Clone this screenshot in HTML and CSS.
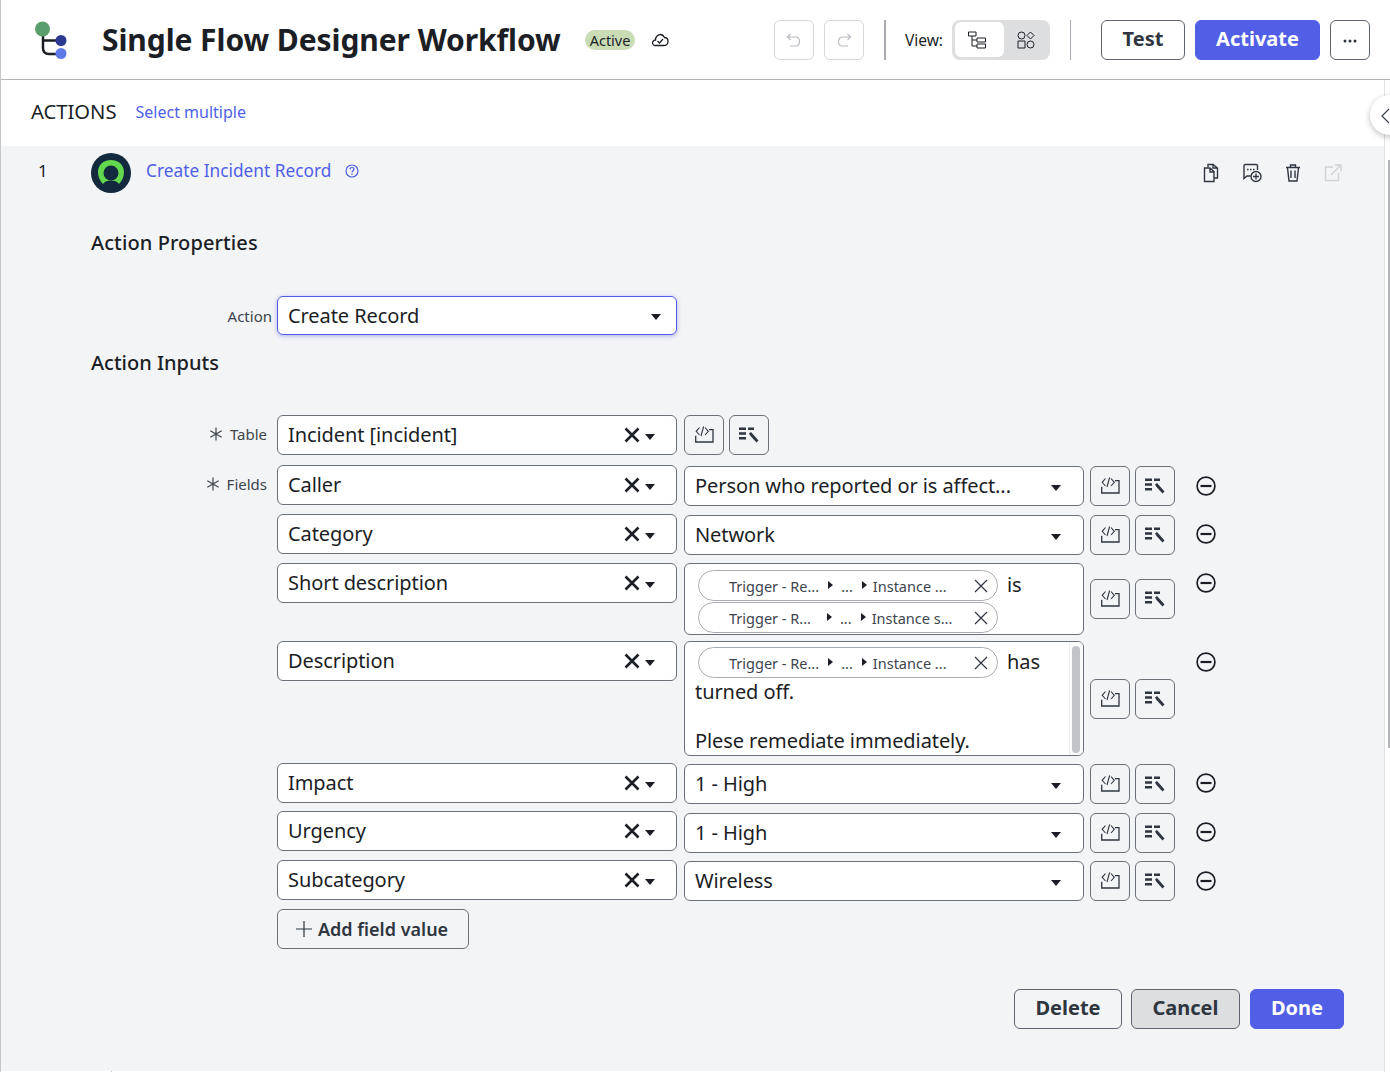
FILE: index.html
```html
<!DOCTYPE html>
<html>
<head>
  <meta charset="utf-8">
  <title>Single Flow Designer Workflow</title>
  <link rel="stylesheet" href="styles.css">
</head>
<body>
  <svg class="defs" width="0" height="0">
    <symbol id="i-code" viewBox="0 0 20 20">
      <path d="M5.500 2.500 2.200 6.300 5.500 10M11 2.500 14.300 6.300 11 10M9.600 1.500 7 11" fill="none" stroke="currentColor" stroke-width="1.100"/>
      <path d="M1.700 10.700V17H19V4.700H15" fill="none" stroke="currentColor" stroke-width="1.300"/>
    </symbol>
    <symbol id="i-wand" viewBox="0 0 20 20">
      <path d="M0 2.500H7V5H0ZM9 2.500H15V5H9ZM0 7.200H7V9.800H0ZM0 12H7V14.600H0Z" fill="currentColor"/>
      <path d="M10 8.500 12 7 14 9.200 19.500 15.500 17.500 17.500 11.500 11Z" fill="currentColor"/>
    </symbol>
    <symbol id="i-minus" viewBox="0 0 20 20">
      <circle cx="10" cy="10" r="8.900" fill="none" stroke="currentColor" stroke-width="1.700"/>
      <path d="M4.500 10H15.500" stroke="currentColor" stroke-width="2.200"/>
    </symbol>
    <symbol id="i-clear" viewBox="0 0 16 16">
      <path d="M1.500 1.500 14.500 14.500M14.500 1.500 1.500 14.500" stroke="currentColor" stroke-width="2.600"/>
    </symbol>
    <symbol id="i-chip-x" viewBox="0 0 16 16">
      <path d="M2 2 14 14M14 2 2 14" stroke="currentColor" stroke-width="1.200"/>
    </symbol>
    <symbol id="i-star" viewBox="0 0 14 14">
      <path d="M7 .5V13.500M1.300 3.800 12.700 10.200M12.700 3.800 1.300 10.200" stroke="currentColor" stroke-width="1.200"/>
    </symbol>
  </svg>

  <div class="app">
    <header class="topbar">
      <svg class="logo" width="34" height="40" viewBox="0 0 34 40">
        <path d="M8 10V28Q8 34 14 34H24M8 20.500H24" fill="none" stroke="#1b1e25" stroke-width="2.500"/>
        <circle cx="7.500" cy="9" r="7.500" fill="#5a9e6b"/>
        <circle cx="26" cy="20.500" r="5.500" fill="#2b3990"/>
        <circle cx="26" cy="33.500" r="5.500" fill="#6079e8"/>
      </svg>
      <h1 class="title">Single Flow Designer Workflow</h1>
      <span class="badge">Active</span>
      <svg class="cloud" width="18" height="14" viewBox="0 0 18 14">
        <path d="M4 12.500C1.500 12.500 1 9.500 2 8.500 2.500 7.500 3.500 7 4.500 7 4.500 3.500 7 1.500 9.500 1.500 12 1.500 13 3.500 13.500 4.500 16 4.500 17 6.500 17 8.500 17 11 15 12.500 13 12.500Z" fill="none" stroke="#1b1e25" stroke-width="1.300"/>
        <path d="M6.500 8 8.500 10 12 6" fill="none" stroke="#1b1e25" stroke-width="1.200"/>
      </svg>

      <div class="topbar-tools">
        <button class="square-btn is-disabled">
          <svg width="16" height="16" viewBox="0 0 16 16"><path d="M4.500 2 1.500 5 4.500 8M2 5H9.500C12 5 13.500 7 13.500 9.500 13.500 12 12 14 9.500 14H4" fill="none" stroke="currentColor" stroke-width="1.200"/></svg>
        </button>
        <button class="square-btn is-disabled">
          <svg width="16" height="16" viewBox="0 0 16 16"><path d="M11.500 2 14.500 5 11.500 8M14 5H6.500C4 5 2.500 7 2.500 9.500 2.500 12 4 14 6.500 14H12" fill="none" stroke="currentColor" stroke-width="1.200"/></svg>
        </button>
        <span class="divider divider-thick"></span>
        <span class="view-label">View:</span>
        <div class="view-switch">
          <span class="view-opt is-on">
            <svg width="18" height="18" viewBox="0 0 18 18"><path d="M.5 1H8V5H.5ZM9 7H17.500V11H9ZM9 13H17.500V17H9ZM4 5V15H9M4 9H9" fill="none" stroke="#1b1e25" stroke-width="1"/></svg>
          </span>
          <span class="view-opt view-opt-off">
            <svg width="18" height="18" viewBox="0 0 18 18"><circle cx="4.500" cy="4.500" r="3.500" fill="none" stroke="#1b1e25"/><path d="M13.500 1 17 4.500 13.500 8 10 4.500ZM1 10H8V17H1Z" fill="none" stroke="#1b1e25"/><circle cx="13.500" cy="13.500" r="3.500" fill="none" stroke="#1b1e25"/></svg>
          </span>
        </div>
        <span class="divider"></span>
        <button class="btn btn-test">Test</button>
        <button class="btn btn-primary btn-activate">Activate</button>
        <button class="square-btn btn-more">
          <svg width="14" height="4" viewBox="0 0 14 4"><circle cx="2" cy="2" r="1.500"/><circle cx="7" cy="2" r="1.500"/><circle cx="12" cy="2" r="1.500"/></svg>
        </button>
      </div>
    </header>

    <div class="actions-bar">
      <span class="actions-title">ACTIONS</span>
      <a class="link select-multiple">Select multiple</a>
      <span class="drawer-toggle">
        <svg width="10" height="16" viewBox="0 0 10 16"><path d="M9 1 2 8 9 15" fill="none" stroke="#444b54" stroke-width="1.300"/></svg>
      </span>
    </div>

    <main class="panel">
      <div class="step-head">
        <span class="step-num">1</span>
        <svg class="step-icon" width="40" height="40" viewBox="0 0 40 40">
          <circle cx="20" cy="20" r="20" fill="#13293d"/>
          <path d="M20 7C12 7 7 12.500 7 19 7 24 9 28 12 31 14 28 16.500 27.500 20 27.500 23.500 27.500 26 28 28 31 31 28 33 24 33 19 33 12.500 28 7 20 7Z" fill="#62d84e"/>
          <circle cx="20" cy="20" r="7.500" fill="#13293d"/>
        </svg>
        <a class="link step-link">Create Incident Record</a>
        <svg class="help" width="14" height="14" viewBox="0 0 14 14"><circle cx="7" cy="7" r="6" fill="none" stroke="#4f5fe6" stroke-width="1.200"/><path d="M5 5.500C5 4 6 3.500 7 3.500 8.200 3.500 9 4.300 9 5.300 9 6.700 7 6.700 7 8.500" fill="none" stroke="#4f5fe6" stroke-width="1.200"/><circle cx="7" cy="10.300" r=".8" fill="#4f5fe6"/></svg>
        <div class="step-tools">
          <svg width="18" height="20" viewBox="0 0 18 20"><path d="M6 4V1.500H11L15.500 5V15H12M2.500 5H8L12 8.500V18.500H2.500ZM8 5V9H12M11 1.500V5H15.500" fill="none" stroke="#2f3640" stroke-width="1.400"/></svg>
          <svg width="20" height="20" viewBox="0 0 20 20"><path d="M8.500 13H5L2 15.500V3C2 2 2.500 1.500 3.500 1.500H14C15 1.500 15.500 2 15.500 3V7" fill="none" stroke="#2f3640" stroke-width="1.400"/><path d="M5 6.500H6.500M8 6.500H9.500M11 6.500H12.500" stroke="#2f3640" stroke-width="1.500"/><circle cx="14" cy="13.500" r="5" fill="none" stroke="#2f3640" stroke-width="1.400"/><path d="M14 10.500V16.500M11 13.500H17" stroke="#2f3640" stroke-width="1.300"/></svg>
          <svg width="18" height="20" viewBox="0 0 18 20"><path d="M2 4.500H16M6.500 4V2H11.500V4M3.500 5 5 18H13L14.500 5M7 7.500V15M11 7.500V15" fill="none" stroke="#2f3640" stroke-width="1.400"/></svg>
          <svg width="18" height="18" viewBox="0 0 18 18"><path d="M9 3H1.500V16.500H14.500V9M7 11 17 1M11 1H17V7" fill="none" stroke="#cfd2d6" stroke-width="1.400"/></svg>
        </div>
      </div>

      <h2 class="section-title section-props">Action Properties</h2>
      <div class="form-row action-row">
        <label class="row-label action-label">Action</label>
        <div class="select select-focus">
          <span class="select-text">Create Record</span>
          <span class="caret"></span>
        </div>
      </div>

      <h2 class="section-title section-inputs">Action Inputs</h2>

      <div class="form-row table-row">
        <label class="row-label"><svg class="star"><use href="#i-star"/></svg>Table</label>
        <div class="select">
          <span class="select-text">Incident [incident]</span>
          <svg class="clear"><use href="#i-clear"/></svg><span class="caret"></span>
        </div>
        <div class="btn-pair">
          <button class="icon-btn"><svg><use href="#i-code"/></svg></button>
          <button class="icon-btn"><svg><use href="#i-wand"/></svg></button>
        </div>
      </div>

      <div class="form-row field-row row-caller">
        <label class="row-label"><svg class="star"><use href="#i-star"/></svg>Fields</label>
        <div class="select">
          <span class="select-text">Caller</span>
          <svg class="clear"><use href="#i-clear"/></svg><span class="caret"></span>
        </div>
        <div class="select value drop-1">
          <span class="select-text">Person who reported or is affect...</span><span class="caret"></span>
        </div>
        <div class="btn-pair drop-1">
          <button class="icon-btn"><svg><use href="#i-code"/></svg></button>
          <button class="icon-btn"><svg><use href="#i-wand"/></svg></button>
        </div>
        <svg class="remove remove-low"><use href="#i-minus"/></svg>
      </div>

      <div class="form-row field-row row-category">
        <span class="row-label"></span>
        <div class="select">
          <span class="select-text">Category</span>
          <svg class="clear"><use href="#i-clear"/></svg><span class="caret"></span>
        </div>
        <div class="select value drop-1">
          <span class="select-text">Network</span><span class="caret"></span>
        </div>
        <div class="btn-pair drop-1">
          <button class="icon-btn"><svg><use href="#i-code"/></svg></button>
          <button class="icon-btn"><svg><use href="#i-wand"/></svg></button>
        </div>
        <svg class="remove"><use href="#i-minus"/></svg>
      </div>

      <div class="form-row field-row row-short">
        <span class="row-label"></span>
        <div class="select">
          <span class="select-text">Short description</span>
          <svg class="clear"><use href="#i-clear"/></svg><span class="caret"></span>
        </div>
        <div class="rich rich-short">
          <div class="rich-line">
            <span class="chip">
              <span class="chip-a">Trigger - Re...</span><i class="arrow"></i><span class="chip-dots">...</span><i class="arrow"></i><span class="chip-b">Instance ...</span>
              <svg class="chip-x"><use href="#i-chip-x"/></svg>
            </span>
            <span class="rich-word">is</span>
          </div>
          <div class="rich-line">
            <span class="chip chip-alt">
              <span class="chip-a">Trigger - R...</span><i class="arrow"></i><span class="chip-dots">...</span><i class="arrow"></i><span class="chip-b">Instance s...</span>
              <svg class="chip-x"><use href="#i-chip-x"/></svg>
            </span>
          </div>
        </div>
        <div class="btn-pair drop-16">
          <button class="icon-btn"><svg><use href="#i-code"/></svg></button>
          <button class="icon-btn"><svg><use href="#i-wand"/></svg></button>
        </div>
        <svg class="remove"><use href="#i-minus"/></svg>
      </div>

      <div class="form-row field-row row-desc">
        <span class="row-label"></span>
        <div class="select">
          <span class="select-text">Description</span>
          <svg class="clear"><use href="#i-clear"/></svg><span class="caret"></span>
        </div>
        <div class="rich rich-desc">
          <div class="rich-line">
            <span class="chip">
              <span class="chip-a">Trigger - Re...</span><i class="arrow"></i><span class="chip-dots">...</span><i class="arrow"></i><span class="chip-b">Instance ...</span>
              <svg class="chip-x"><use href="#i-chip-x"/></svg>
            </span>
            <span class="rich-word">has</span>
          </div>
          <p class="rich-text">turned off.</p>
          <p class="rich-text rich-last">Plese remediate immediately.</p>
          <span class="rich-scroll"></span>
        </div>
        <div class="btn-pair drop-38">
          <button class="icon-btn"><svg><use href="#i-code"/></svg></button>
          <button class="icon-btn"><svg><use href="#i-wand"/></svg></button>
        </div>
        <svg class="remove remove-low"><use href="#i-minus"/></svg>
      </div>

      <div class="form-row field-row row-impact">
        <span class="row-label"></span>
        <div class="select">
          <span class="select-text">Impact</span>
          <svg class="clear"><use href="#i-clear"/></svg><span class="caret"></span>
        </div>
        <div class="select value drop-1">
          <span class="select-text">1 - High</span><span class="caret"></span>
        </div>
        <div class="btn-pair drop-1">
          <button class="icon-btn"><svg><use href="#i-code"/></svg></button>
          <button class="icon-btn"><svg><use href="#i-wand"/></svg></button>
        </div>
        <svg class="remove"><use href="#i-minus"/></svg>
      </div>

      <div class="form-row field-row row-urgency">
        <span class="row-label"></span>
        <div class="select">
          <span class="select-text">Urgency</span>
          <svg class="clear"><use href="#i-clear"/></svg><span class="caret"></span>
        </div>
        <div class="select value drop-2">
          <span class="select-text">1 - High</span><span class="caret"></span>
        </div>
        <div class="btn-pair drop-2">
          <button class="icon-btn"><svg><use href="#i-code"/></svg></button>
          <button class="icon-btn"><svg><use href="#i-wand"/></svg></button>
        </div>
        <svg class="remove remove-low"><use href="#i-minus"/></svg>
      </div>

      <div class="form-row field-row row-sub">
        <span class="row-label"></span>
        <div class="select">
          <span class="select-text">Subcategory</span>
          <svg class="clear"><use href="#i-clear"/></svg><span class="caret"></span>
        </div>
        <div class="select value drop-1">
          <span class="select-text">Wireless</span><span class="caret"></span>
        </div>
        <div class="btn-pair drop-1">
          <button class="icon-btn"><svg><use href="#i-code"/></svg></button>
          <button class="icon-btn"><svg><use href="#i-wand"/></svg></button>
        </div>
        <svg class="remove remove-low"><use href="#i-minus"/></svg>
      </div>

      <div class="form-row add-row">
        <span class="row-label"></span>
        <button class="add-btn">
          <svg width="18" height="18" viewBox="0 0 18 18"><path d="M9 1V17M1 9H17" stroke="#2f3640" stroke-width="1.200"/></svg>
          Add field value
        </button>
      </div>

      <div class="footer-btns">
        <button class="btn btn-delete">Delete</button>
        <button class="btn btn-cancel">Cancel</button>
        <button class="btn btn-primary btn-done">Done</button>
      </div>
    </main>
    <div class="bottom-strip"></div>
    <span class="rail"></span>
    <span class="scroll-thumb"></span>
  </div>
</body>
</html>
```

FILE: styles.css
```css
* {
  box-sizing: border-box;
}

html, body {
  margin: 0;
  height: 100%;
  overflow: hidden;
}

body {
  font-family: "Noto Sans", "Liberation Sans", sans-serif;
  color: #1b1e25;
  background: #fff;
}

.defs {
  position: absolute;
}

button {
  font-family: inherit;
  cursor: pointer;
}

.app {
  position: relative;
  height: 1072px;
  border-left: 1px solid #c4c7cb;
  display: flex;
  flex-direction: column;
}

/* top bar */
.topbar {
  height: 80px;
  flex: none;
  display: flex;
  align-items: center;
  padding: 1px 20px 0 34px;
  border-bottom: 1px solid #b0b3b8;
}

.logo {
  flex: none;
}

.title {
  margin: 0 0 0 33px;
  font-size: 30px;
  font-weight: 700;
  line-height: 40px;
  letter-spacing: -.07px;
  white-space: nowrap;
}

.badge {
  margin-left: 24px;
  height: 20px;
  padding: 0 5px;
  border-radius: 10px;
  background: #c9dcb6;
  font-size: 14.500px;
  line-height: 20px;
}

.cloud {
  margin-left: 16px;
}

.topbar-tools {
  margin-left: auto;
  display: flex;
  align-items: center;
}

.square-btn {
  width: 40px;
  height: 40px;
  padding: 0;
  display: flex;
  align-items: center;
  justify-content: center;
  background: #fff;
  border: 1px solid #5d646d;
  border-radius: 6px;
}

.square-btn.is-disabled {
  border-color: #d5d7da;
  color: #b9bcc1;
  margin-right: 10px;
}

.divider {
  width: 1px;
  height: 40px;
  background: #a9adb3;
  margin: 0 30px 0 20px;
}

.divider-thick {
  width: 2px;
  margin: 0 19px 0 10px;
}

.view-label {
  font-size: 15.500px;
  margin-right: 9px;
}

.view-switch {
  width: 98px;
  height: 40px;
  padding: 2px 3px 3px;
  background: #dcdee0;
  border-radius: 8px;
  display: flex;
}

.view-opt {
  flex: none;
  width: 43px;
  height: 35px;
  display: flex;
  align-items: center;
  justify-content: center;
  border-radius: 6px;
}

.view-opt.is-on {
  width: 49px;
  background: #fff;
}

.view-opt.is-on svg {
  margin: 1px 5px 0 0;
}

.view-opt-off svg {
  margin-top: 1px;
}

.btn {
  height: 40px;
  padding: 0 0 4px;
  border: 1px solid #5d646d;
  border-radius: 6px;
  background: #fff;
  color: #2f3640;
  font-size: 20px;
  font-weight: 700;
}

.btn-primary {
  background: #515ee6;
  border-color: #515ee6;
  color: #fff;
}

.btn-test {
  width: 84px;
}

.btn-activate {
  width: 125px;
  margin: 0 10px;
}

.btn-more svg {
  fill: #2f3640;
  margin-top: 2px;
}

/* actions bar */
.actions-bar {
  height: 66px;
  flex: none;
  position: relative;
  display: flex;
  align-items: center;
  padding: 0 0 5px 30px;
}

.actions-title {
  font-size: 20.200px;
}

.link {
  color: #4f5fe6;
}

.select-multiple {
  margin: 2px 0 0 19px;
  font-size: 16px;
}

.drawer-toggle {
  position: absolute;
  top: 15px;
  left: 1369px;
  width: 40px;
  height: 40px;
  border-radius: 50%;
  background: #fff;
  box-shadow: 0 2px 6px rgba(0, 0, 0, .25);
  padding: 12px 0 0 10px;
  z-index: 2;
}

/* panel */
.panel {
  flex: 1;
  background: #f3f4f6;
  padding-top: 7px;
  overflow: hidden;
  border-right: 5px solid #fff;
}

.bottom-strip {
  height: 1px;
  flex: none;
  background: linear-gradient(90deg, #fff 110px, #c4c7cb 110px, #c4c7cb 111px, #fff 111px);
}

.rail {
  position: absolute;
  top: 80px;
  bottom: 0;
  left: 1383px;
  width: 1px;
  background: #e0e2e5;
}

.scroll-thumb {
  position: absolute;
  top: 160px;
  right: 0;
  width: 2px;
  height: 588px;
  background: #b4b6b9;
}

.step-head {
  height: 40px;
  display: flex;
  align-items: center;
}

.step-num {
  width: 90px;
  padding-left: 37px;
  font-size: 17px;
  margin-top: -6px;
}

.step-link {
  margin-left: 15px;
  margin-top: -6px;
  font-size: 17.300px;
}

.help {
  margin-left: 14px;
  margin-top: -4px;
}

.step-tools {
  margin-left: auto;
  margin-right: 43px;
  display: flex;
  align-items: center;
  gap: 22px;
  margin-top: -1px;
}

.section-title {
  margin: 0 0 0 90px;
  font-size: 20px;
  font-weight: 500;
  line-height: 28px;
}

.section-props {
  margin-top: 36px;
  letter-spacing: .1px;
}

.section-inputs {
  margin-top: 13px;
}

/* form rows */
.form-row {
  display: flex;
  align-items: flex-start;
}

.row-label {
  flex: none;
  width: 276px;
  height: 40px;
  padding: 0 10px 2px 0;
  display: flex;
  align-items: center;
  justify-content: flex-end;
  font-size: 15px;
  color: #3d444d;
}

.action-row {
  margin-top: 39px;
}

.action-label {
  padding: 0 5px 0 0;
}

.table-row {
  margin-top: 38px;
}

.row-caller {
  margin-top: 10px;
}

.row-category,
.row-short,
.add-row {
  margin-top: 8px;
}

.row-desc {
  margin-top: 6px;
}

.row-impact,
.row-urgency,
.row-sub {
  margin-top: 7px;
}

.star {
  width: 14px;
  height: 14px;
  margin-right: 7px;
  color: #3d444d;
}

.select {
  flex: none;
  width: 400px;
  height: 40px;
  display: flex;
  align-items: center;
  padding: 0 21px 0 10px;
  background: #fff;
  border: 1px solid #6b7179;
  border-radius: 6px;
  font-size: 20px;
  letter-spacing: -.08px;
  white-space: nowrap;
}

.select-text {
  flex: 1;
  margin-bottom: 2px;
}

.select-focus {
  border-color: #515ee6;
  box-shadow: 0 1px 4px rgba(81, 94, 230, .45);
  height: 39px;
  padding-right: 15px;
}

.select-focus .select-text {
  margin-bottom: 0;
}

.caret {
  width: 0;
  height: 0;
  border-left: 5.500px solid transparent;
  border-right: 5.500px solid transparent;
  border-top: 6px solid #1b1e25;
  margin-top: 4px;
}

.select-focus .caret {
  margin-top: 2px;
}

.clear {
  width: 16px;
  height: 16px;
  margin-right: 5px;
  color: #1b1e25;
}

.value {
  margin-left: 7px;
  padding-right: 22px;
}

.drop-1 {
  margin-top: 1px;
}

.drop-2 {
  margin-top: 2px;
}

.drop-16 {
  margin-top: 16px;
}

.drop-38 {
  margin-top: 38px;
}

.btn-pair {
  flex: none;
  display: flex;
  gap: 5px;
  margin-left: 6px;
}

.table-row .btn-pair {
  margin-left: 7px;
}

.icon-btn {
  width: 40px;
  height: 40px;
  padding: 0;
  display: flex;
  align-items: center;
  justify-content: center;
  background: transparent;
  border: 1px solid #6b7179;
  border-radius: 6px;
  color: #2f3640;
}

.icon-btn svg {
  width: 20px;
  height: 20px;
}

.remove {
  flex: none;
  width: 20px;
  height: 20px;
  margin: 10px 0 0 21px;
  color: #1b1e25;
}

.remove-low {
  margin-top: 11px;
}

/* rich value boxes with pills */
.rich {
  flex: none;
  position: relative;
  width: 400px;
  margin-left: 7px;
  padding: 6px 0 0 10px;
  background: #fff;
  border: 1px solid #6b7179;
  border-radius: 6px;
  font-size: 20px;
  letter-spacing: -.08px;
  overflow: hidden;
}

.rich-short {
  height: 72px;
}

.rich-desc {
  height: 115px;
  padding-top: 5px;
}

.rich-line {
  display: flex;
  align-items: flex-start;
  margin-left: 3px;
  margin-bottom: 1px;
}

.rich-word {
  margin-left: 9px;
  line-height: 30px;
}

.chip {
  flex: none;
  width: 300px;
  height: 31px;
  display: flex;
  align-items: center;
  padding-left: 30px;
  border: 1px solid #a9adb3;
  border-radius: 16px;
  background: #fff;
  font-size: 14.500px;
  letter-spacing: 0;
  color: #3d444d;
  white-space: nowrap;
}

.arrow {
  width: 0;
  height: 0;
  border-top: 4.500px solid transparent;
  border-bottom: 4.500px solid transparent;
  border-left: 5px solid #1b1e25;
  margin: 0 0 2px 9px;
}

.chip-dots {
  margin-left: 8px;
}

.chip-dots + .arrow {
  margin-left: 9px;
}

.chip-b {
  margin-left: 6px;
}

.chip-x {
  width: 16px;
  height: 16px;
  margin-left: auto;
  margin-right: 8px;
  color: #2f3640;
}

.chip-alt .chip-a + .arrow {
  margin-left: 16px;
}

.rich-text {
  margin: 1px 0 0;
  line-height: 25px;
}

.rich-last {
  margin-top: 24px;
}

.rich-scroll {
  position: absolute;
  top: 0;
  right: 0;
  bottom: 0;
  width: 14px;
  padding: 4px 3px 2px 2px;
  border-left: 1px solid #eceef0;
  background: #fafafa;
}

.rich-scroll::after {
  content: "";
  display: block;
  height: 100%;
  background: #c2c4c7;
  border-radius: 4px;
}

/* bottom */
.add-btn {
  width: 192px;
  height: 40px;
  padding: 0 0 0 17px;
  display: flex;
  align-items: center;
  gap: 5px;
  background: transparent;
  border: 1px solid #6b7179;
  border-radius: 6px;
  font-size: 18px;
  font-weight: 600;
  color: #2f3640;
}

.footer-btns {
  display: flex;
  justify-content: flex-end;
  gap: 10px;
  margin-top: 40px;
  margin-right: 41px;
}

.btn-delete {
  width: 108px;
  margin-right: -1px;
  background: transparent;
}

.btn-cancel {
  width: 109px;
  background: #dcdee0;
}

.btn-done {
  width: 94px;
}
```
